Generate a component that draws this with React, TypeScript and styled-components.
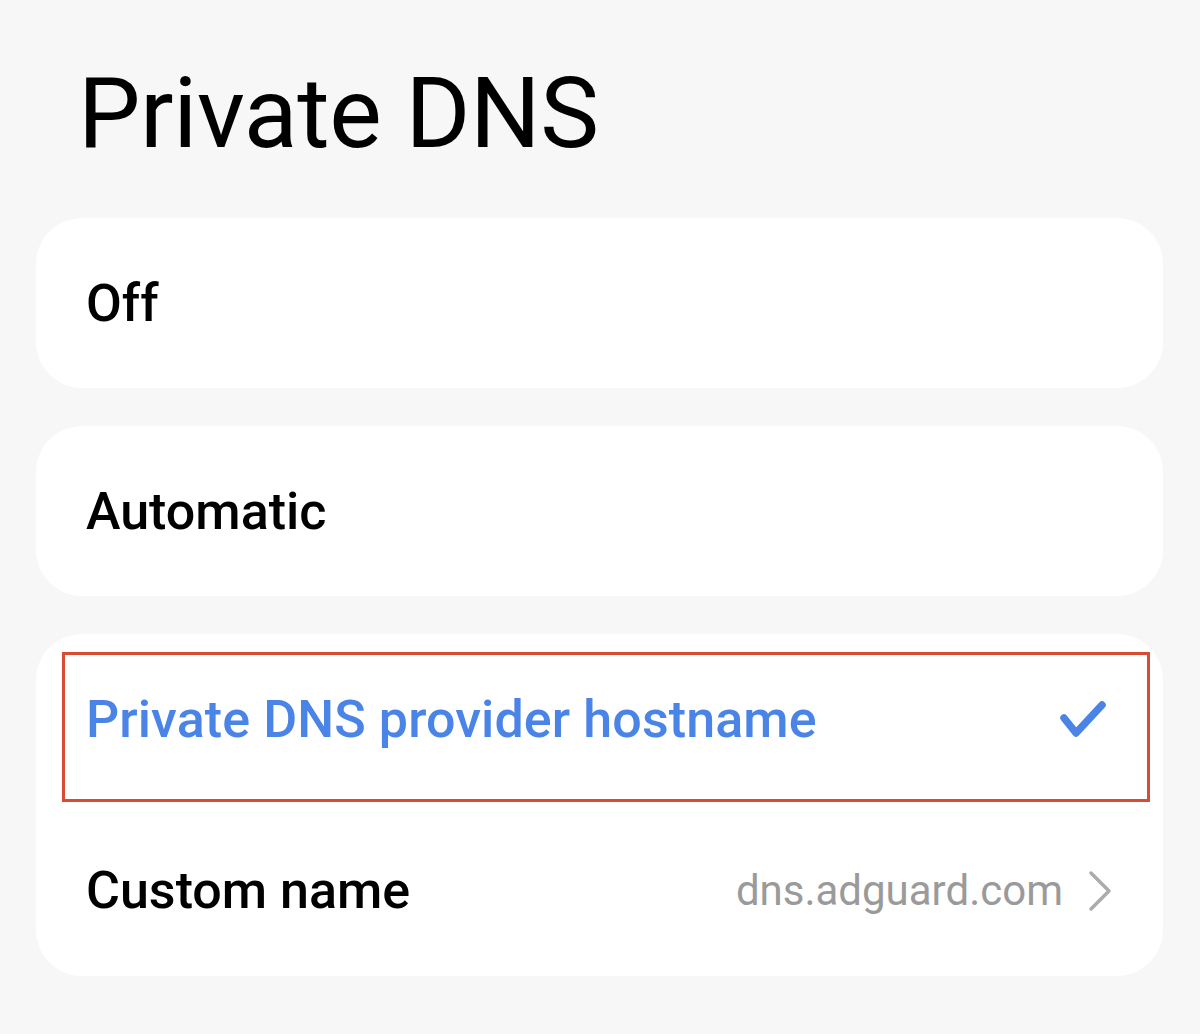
import React from "react";
import styled, { createGlobalStyle } from "styled-components";

const Global = createGlobalStyle`
  html, body { margin: 0; padding: 0; background: #f7f7f7; }
  body { font-family: Roboto, "Noto Sans", "Liberation Sans", sans-serif; }
`;

const Page = styled.div`
  display: flex;
  flex-direction: column;
  padding: 0 37px 0 36px;
  min-height: 1034px;
  box-sizing: border-box;
`;

const Title = styled.h1`
  margin: 0;
  padding: 64px 0 0 42px;
  font-size: 99px;
  line-height: 99px;
  font-weight: 400;
  color: #000;
  letter-spacing: -0.4px;
`;

const Cards = styled.div`
  display: flex;
  flex-direction: column;
  gap: 38px;
  margin-top: 55px;
`;

const Card = styled.div`
  background: #fff;
  border-radius: 46px;
  display: flex;
  flex-direction: column;
`;

const Row = styled.div<{ $h?: number }>`
  position: relative;
  height: ${(p) => p.$h ?? 170}px;
  display: flex;
  align-items: center;
  padding: 0 50px;
  gap: 24px;
`;

const Label = styled.span<{ $active?: boolean }>`
  flex: 1;
  font-size: 52px;
  font-weight: 500;
  color: ${(p) => (p.$active ? "#4a84e6" : "#000")};
  letter-spacing: ${(p) => (p.$active ? "0.1px" : "0")};
`;

const Value = styled.span`
  font-size: 42px;
  font-weight: 400;
  color: #9a9a9a;
`;

const Highlight = styled.div`
  position: absolute;
  top: 18px;
  left: 26px;
  right: 13px;
  bottom: 3px;
  border: 3.5px solid #d94b32;
  pointer-events: none;
`;

const Check = () => (
  <svg width="52" height="44" viewBox="0 0 52 44" style={{ marginRight: 3 }}>
    <polyline
      points="6,20 18,35 44,7"
      fill="none"
      stroke="#4a84e6"
      strokeWidth="7.5"
      strokeLinecap="round"
      strokeLinejoin="round"
    />
  </svg>
);

const Chevron = () => (
  <svg width="26" height="44" viewBox="0 0 26 44">
    <polyline
      points="4,4 22,22 4,40"
      fill="none"
      stroke="#ababab"
      strokeWidth="3.5"
      strokeLinecap="round"
      strokeLinejoin="round"
    />
  </svg>
);

export default function App() {
  return (
    <>
      <Global />
      <Page>
        <Title>Private DNS</Title>
        <Cards>
          <Card>
            <Row>
              <Label>Off</Label>
            </Row>
          </Card>
          <Card>
            <Row>
              <Label>Automatic</Label>
            </Row>
          </Card>
          <Card>
            <Row $h={171}>
              <Label $active>Private DNS provider hostname</Label>
              <Check />
              <Highlight />
            </Row>
            <Row $h={171}>
              <Label>Custom name</Label>
              <Value>dns.adguard.com</Value>
              <Chevron />
            </Row>
          </Card>
        </Cards>
      </Page>
    </>
  );
}
